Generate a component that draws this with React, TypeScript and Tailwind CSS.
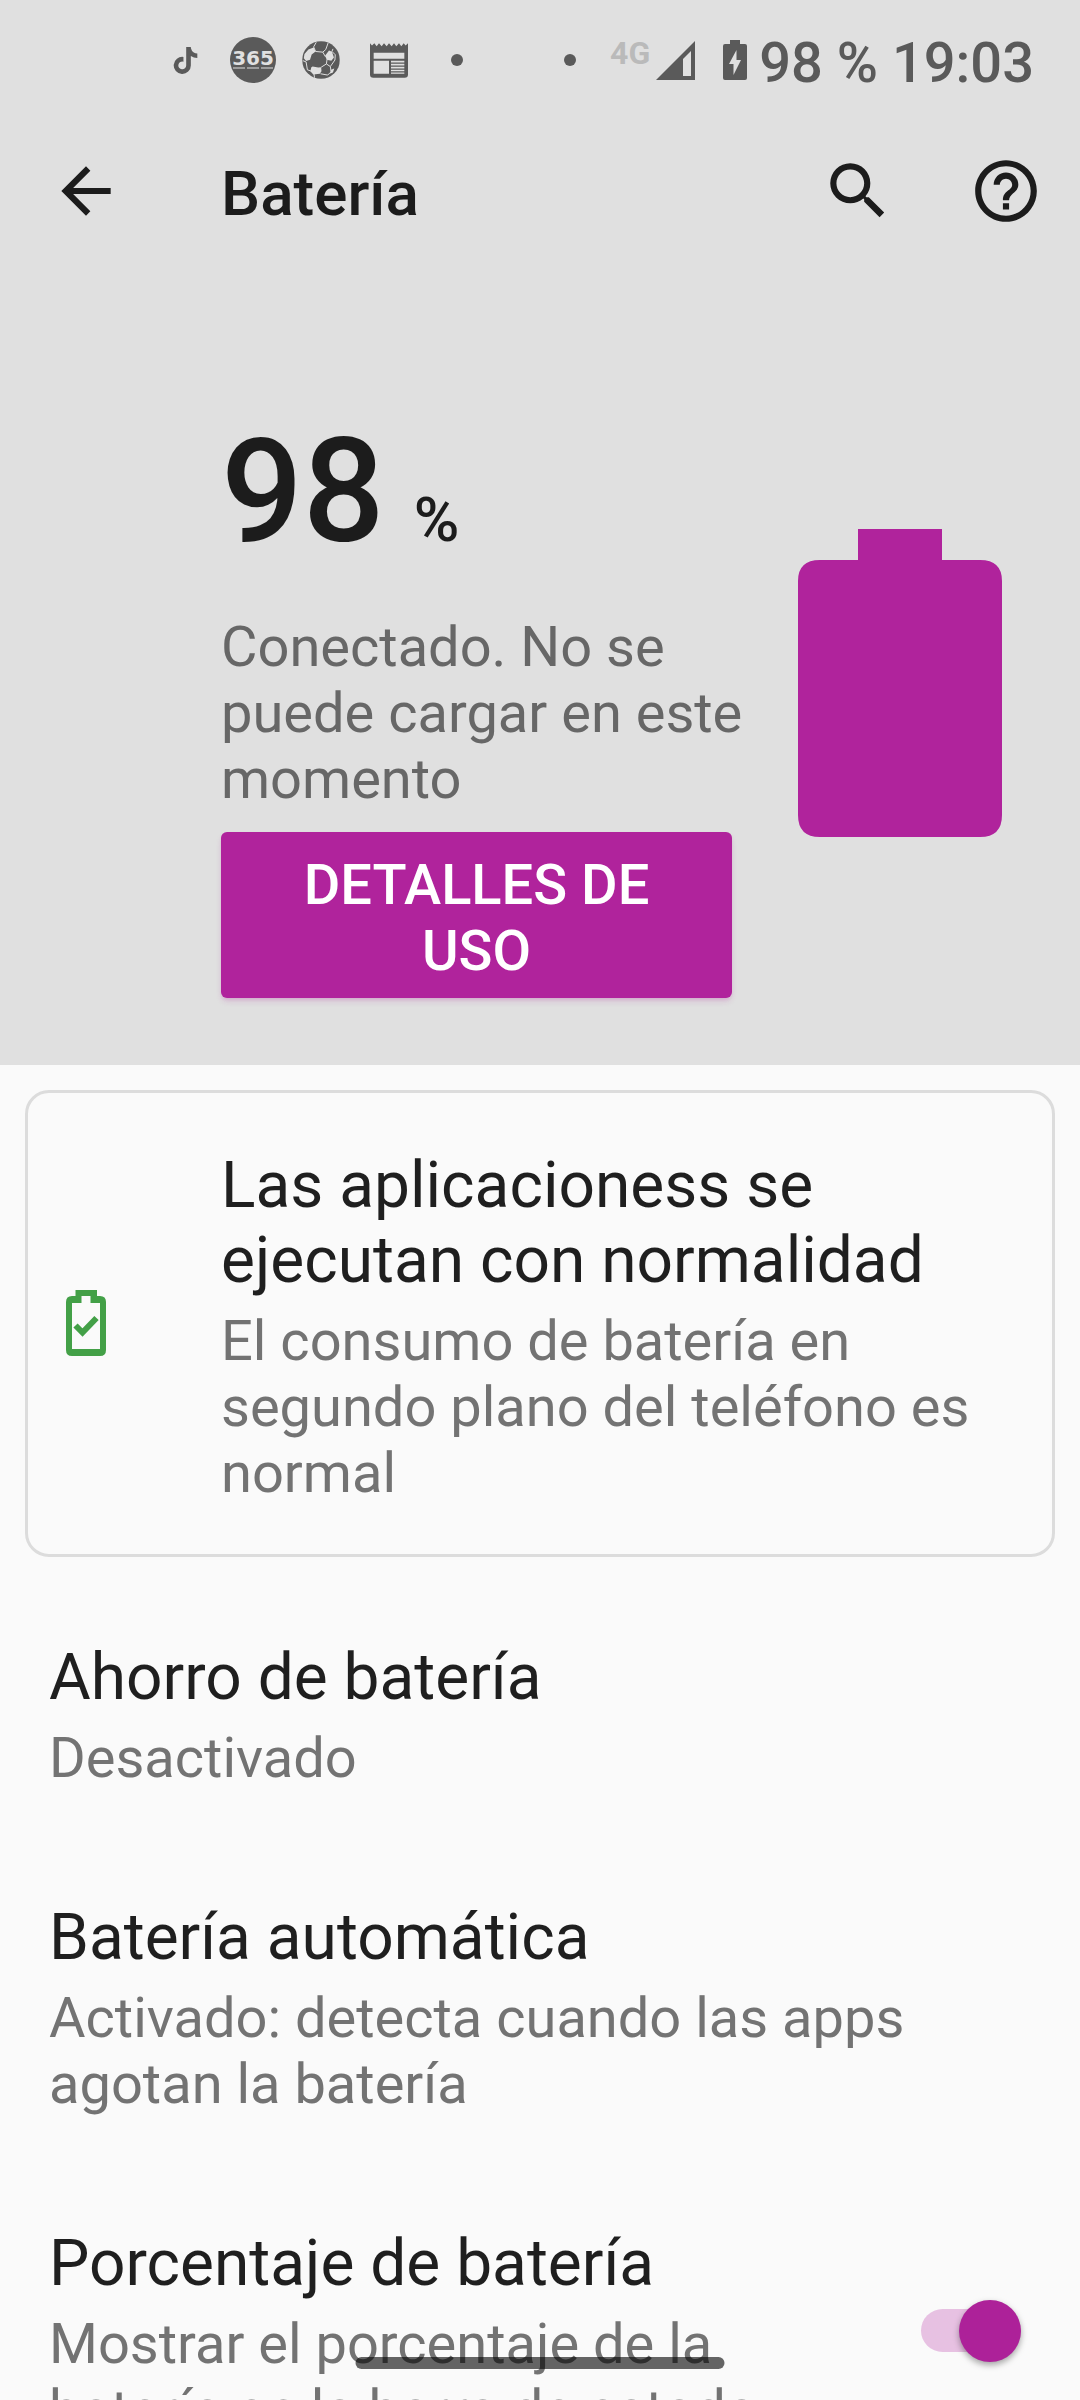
import * as React from "react";
import { FaTiktok } from "react-icons/fa";
import { MdArrowBack, MdHelpOutline, MdSearch } from "react-icons/md";

function Logo365() {
  return (
    <svg viewBox="0 0 46 46" className="size-[46px]">
      <circle cx="23" cy="23" r="23" fill="#5a5a5a" />
      <text
        x="23"
        y="28"
        textAnchor="middle"
        fontFamily="DejaVu Sans"
        fontWeight="700"
        fontSize="20"
        fill="#e0e0e0"
      >
        365
      </text>
      <path d="M3 31h12M17 31h12M31 31h12" stroke="#e0e0e0" strokeWidth="1" />
    </svg>
  );
}

function SoccerIcon() {
  return (
    <svg viewBox="456 64 115 116" className="size-[38px]">
      <clipPath id="ball">
        <circle cx="513.5" cy="122" r="57.5" />
      </clipPath>
      <g clipPath="url(#ball)">
        <rect x="456" y="64" width="115" height="116" fill="#5a5a5a" />
        <g fill="#e0e0e0">
          <path d="M463 104l12-14 16-6 6 12-12 9-5 16-12 4-7-8z" />
          <path d="M538 93l9 4 6 17-8 10-14-3-5-12z" />
          <path d="M488 142l17 3 9-1 1 12-5 8-20 2-9-10 3-12z" />
          <path d="M544 152l10-4-4 12-10 4z" />
        </g>
        <g stroke="#e0e0e0" strokeWidth="3" fill="none">
          <path d="M497 96l-6-14 8-14M497 96l22 2 9-8 8-22M519 98l8 14M514 144l16-10 2-14M530 134l12 8 2 14M542 142l14-20 1-16-10-10 3-8M458 124l10 4 4 24 12 4M512 164l22 4 8-8M492 164l2 14" />
        </g>
      </g>
    </svg>
  );
}

function NewsIcon() {
  return (
    <svg viewBox="660 70 114 104" className="h-[35px] w-[38px]">
      <path
        fill="#5a5a5a"
        fillRule="evenodd"
        d="M660 70l6 7 7-7 7 9 7-9 8 9 7-9 8 9 7-9 8 9 7-9 7 9 8-9 7 9 7-9 6 7 7-7V164q0 10-10 10H670q-10 0-10-10zM671 99v18h92V99zM671 123v39h46v-39zM723 123v5h40v-5zM723 132v5h40v-5zM723 141v5h40v-5zM723 150v4h40v-4zM723 158v4h40v-4z"
      />
    </svg>
  );
}

function SignalIcon() {
  return (
    <svg viewBox="0 0 39 39" className="size-[39px]">
      <path
        fill="#5a5a5a"
        fillRule="evenodd"
        d="M39 0v39H0zM35 10l-8 8v17h8z"
      />
    </svg>
  );
}

function ChargingIcon() {
  return (
    <svg viewBox="0 0 24 40" className="h-10 w-6">
      <path
        fill="#5a5a5a"
        fillRule="evenodd"
        d="M7 0h10v4h5q2 0 2 2v32q0 2-2 2H2q-2 0-2-2V6q0-2 2-2h5zM13.500 10L6 24h4.500v11L18 20h-4.500z"
      />
    </svg>
  );
}

function BatteryOkIcon() {
  return (
    <svg viewBox="0 0 40 66" className="h-[66px] w-10">
      <path
        fill="#43a047"
        fillRule="evenodd"
        d="M9.500 0H31v6h3q6 0 6 6v48q0 6-6 6H6q-6 0-6-6V12q0-6 6-6h3.500zM15.500 6v7H6v46h28V13h-9.500V6z"
      />
      <path
        d="M9.500 35.500l7 7L30.500 28"
        fill="none"
        stroke="#43a047"
        strokeWidth="6"
      />
    </svg>
  );
}

function StatusBar() {
  return (
    <div className="flex h-[105px] items-center justify-between pt-[15px] pr-[46px] pl-[151px] text-[#5a5a5a]">
      <div className="flex items-center *:flex *:w-[68px] *:justify-center">
        <span>
          <FaTiktok className="size-[27px]" />
        </span>
        <span>
          <Logo365 />
        </span>
        <span>
          <SoccerIcon />
        </span>
        <span>
          <NewsIcon />
        </span>
        <span>
          <i className="size-3 rounded-full bg-[#5a5a5a]" />
        </span>
      </div>
      <div className="flex items-center">
        <i className="mr-[34px] size-3 rounded-full bg-[#5a5a5a]" />
        <span className="mt-2.5 mr-1.5 self-start text-[32px] leading-[38px] font-bold text-[#bababa]">
          4G
        </span>
        <SignalIcon />
        <span className="mr-3 ml-7">
          <ChargingIcon />
        </span>
        <span className="pt-1.5 text-[56px] leading-[66px] font-medium whitespace-pre">
          98 % 19:03
        </span>
      </div>
    </div>
  );
}

function PreferenceText({
  title,
  summary,
}: {
  title: string;
  summary: string;
}) {
  return (
    <span className="block">
      <span className="block text-[64px] leading-[75px] text-[#1f1f1f]">
        {title}
      </span>
      <span className="mt-2.5 block text-[56px] leading-[66px] text-[#737373]">
        {summary}
      </span>
    </span>
  );
}

export default function BatterySettings() {
  const [showPercent, setShowPercent] = React.useState(true);

  return (
    <div className="relative h-screen overflow-hidden bg-[#fafafa] font-['Roboto',sans-serif]">
      <header className="bg-[#e0e0e0] pb-[67px] text-[#1c1c1c]">
        <StatusBar />
        <div className="flex h-[172px] items-center pr-[37px] pl-[49px]">
          <button aria-label="Atrás">
            <MdArrowBack className="size-[74px]" />
          </button>
          <h1 className="ml-[98px] flex-1 pt-1 text-[62px] leading-[75px] font-medium">
            Batería
          </h1>
          <button aria-label="Buscar" className="mr-[74px]">
            <MdSearch className="size-[74px]" />
          </button>
          <button aria-label="Ayuda">
            <MdHelpOutline className="size-[74px]" />
          </button>
        </div>

        <div className="flex items-start justify-between pt-[129px] pr-[78px] pl-[221px]">
          <div className="w-[530px]">
            <p className="flex items-baseline gap-[29px] text-[144px] leading-[172px] font-medium">
              98 <span className="text-[62px]">%</span>
            </p>
            <p className="mt-2 text-[56px] leading-[66px] text-[#676767]">
              Conectado. No se puede cargar en este momento
            </p>
            <button className="mt-5 w-[511px] rounded-md bg-[#b0239c] px-12 pt-5 pb-3.5 text-[56px] leading-[66px] font-medium text-white uppercase shadow-md shadow-[#b0239c]/20">
              Detalles de uso
            </button>
          </div>
          <svg viewBox="0 0 204 308" className="mt-[123px] h-[308px] w-[204px]">
            <path
              fill="#b0239c"
              d="M60 0h84v31h38q22 0 22 21v234q0 22-22 22H22q-22 0-22-22V52q0-21 22-21h38z"
            />
          </svg>
        </div>
      </header>

      <main>
        <section className="mx-[25px] mt-[25px] mb-7 flex items-center rounded-3xl border-3 border-[#dcdcdc] pt-[47px] pr-12 pb-12 pl-[38px]">
          <BatteryOkIcon />
          <div className="ml-[115px] flex-1 pt-2">
            <PreferenceText
              title="Las aplicacioness se ejecutan con normalidad"
              summary="El consumo de batería en segundo plano del teléfono es normal"
            />
          </div>
        </section>

        <button className="block w-full px-[49px] pt-[55px] pb-[54px] text-left">
          <PreferenceText title="Ahorro de batería" summary="Desactivado" />
        </button>
        <button className="block w-full px-[49px] pt-[55px] pb-[54px] text-left">
          <PreferenceText
            title="Batería automática"
            summary="Activado: detecta cuando las apps agotan la batería"
          />
        </button>
        <label className="flex items-center pt-[55px] pr-[59px] pb-[54px] pl-[49px]">
          <span className="flex-1 pr-[61px]">
            <PreferenceText
              title="Porcentaje de batería"
              summary="Mostrar el porcentaje de la batería en la barra de estado"
            />
          </span>
          <span className="relative mb-2 flex h-[62px] w-[100px] items-center">
            <input
              type="checkbox"
              role="switch"
              checked={showPercent}
              onChange={(e) => setShowPercent(e.target.checked)}
              className="peer h-[43px] w-full appearance-none rounded-full bg-gray-300 checked:bg-[#e7c1e2]"
            />
            <span className="pointer-events-none absolute left-0 size-[62px] rounded-full bg-gray-50 shadow-[0_3px_6px_rgba(0,0,0,0.35)] peer-checked:right-0 peer-checked:left-auto peer-checked:bg-[#ad2199]" />
          </span>
        </label>
      </main>

      {/* gesture bar */}
      <div className="absolute bottom-[31px] left-1/2 h-3 w-[369px] -translate-x-1/2 rounded-full bg-black/60" />
    </div>
  );
}
